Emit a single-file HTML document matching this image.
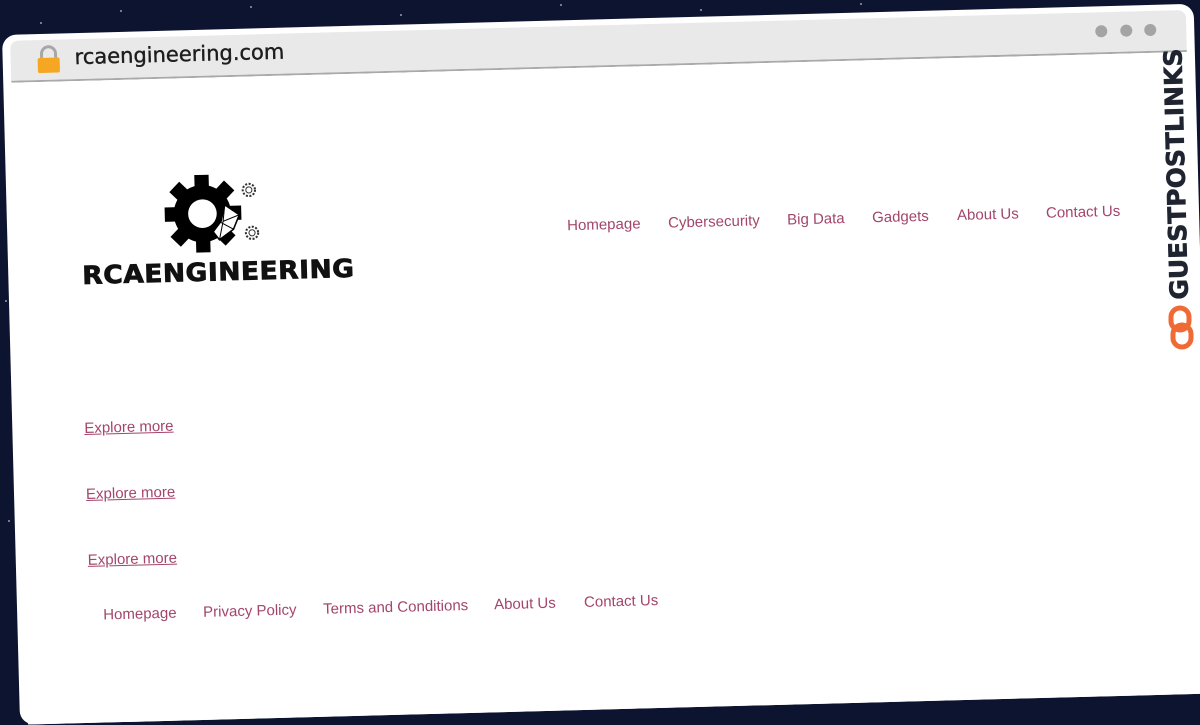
<!DOCTYPE html>
<html><head><meta charset="utf-8">
<style>
html,body{margin:0;padding:0;width:1200px;height:670px;overflow:hidden;background:#0d1430;font-family:"Liberation Sans",sans-serif}
.star{position:absolute;background:#cfd6ea;border-radius:50%;width:2px;height:2px;opacity:.7}
#win{position:absolute;left:2px;top:35px;width:1192px;height:690px;background:#fff;border-radius:14px;transform-origin:0 0;transform:rotate(-1.5deg)}
#bar{position:absolute;left:8px;top:6px;right:8px;height:40px;background:#e9e9ea;border-radius:8px 8px 0 0;border-bottom:2px solid #a9a9ab}
#content{position:absolute;left:8px;top:48px;right:8px;bottom:0;background:#fff}
.a{position:absolute;color:#a3456b;font-size:15px;white-space:nowrap;line-height:18px}
.u{text-decoration:underline}
.dot{position:absolute;top:13px;width:12px;height:12px;border-radius:50%;background:#a4a4a6}
</style></head><body>
<div class="star" style="left:120px;top:10px"></div>
<div class="star" style="left:250px;top:6px"></div>
<div class="star" style="left:400px;top:14px"></div>
<div class="star" style="left:560px;top:4px"></div>
<div class="star" style="left:700px;top:9px"></div>
<div class="star" style="left:860px;top:3px"></div>
<div class="star" style="left:40px;top:22px"></div>
<div class="star" style="left:5px;top:300px"></div>
<div class="star" style="left:8px;top:520px"></div>
<div id="win">
  <div id="bar">
    <svg style="position:absolute;left:25px;top:5px" width="26" height="30" viewBox="0 0 26 30"><path d="M6 13V9a7 7 0 0 1 14 0v4" fill="none" stroke="#a7a7a7" stroke-width="3"/><rect x="2" y="13" width="22" height="15" rx="2" fill="#f5a623"/></svg>
    <div style="position:absolute;left:64px;top:6px;font-family:'DejaVu Sans',sans-serif;font-size:21px;color:#1d1d1d;-webkit-text-stroke:0.4px #1d1d1d">rcaengineering.com</div>
    <div class="dot" style="left:1085px"></div>
    <div class="dot" style="left:1110px"></div>
    <div class="dot" style="left:1134px"></div>
  </div>
  <div id="content">
    <svg style="position:absolute;left:150px;top:97px" width="104" height="92" viewBox="0 0 100 90">
      <g transform="translate(36,38)">
        <circle r="28" fill="#000"/>
        <g fill="#000">
          <rect x="-7" y="-38" width="14" height="14"/><rect x="-7" y="24" width="14" height="14"/>
          <rect x="-38" y="-7" width="14" height="14"/><rect x="24" y="-7" width="14" height="14"/>
          <rect x="-7" y="-38" width="14" height="14" transform="rotate(45)"/><rect x="-7" y="24" width="14" height="14" transform="rotate(45)"/>
          <rect x="-38" y="-7" width="14" height="14" transform="rotate(45)"/><rect x="24" y="-7" width="14" height="14" transform="rotate(45)"/>
        </g>
        <circle r="14" fill="#fff"/>
      </g>
      <path d="M58 30l14 10-6 14-14 10-6-8 8-10z" fill="#fff" stroke="#000" stroke-width="1.5"/>
      <path d="M58 30l-2 16 16-6M56 46l-4 18M66 54l-14-8" fill="none" stroke="#000" stroke-width="1"/>
      <circle cx="82" cy="16" r="6" fill="none" stroke="#333" stroke-width="2" stroke-dasharray="2 1.5"/>
      <circle cx="82" cy="16" r="3" fill="none" stroke="#333" stroke-width="1"/>
      <circle cx="84" cy="58" r="6" fill="none" stroke="#333" stroke-width="2" stroke-dasharray="2 1.5"/>
      <circle cx="84" cy="58" r="3" fill="none" stroke="#333" stroke-width="1"/>
    </svg>
    <div style="position:absolute;left:66px;top:180px;font-family:'DejaVu Sans',sans-serif;font-weight:bold;font-size:25px;color:#111;letter-spacing:0.5px;transform:scaleX(1.06);transform-origin:0 0;-webkit-text-stroke:0.8px #111">RCAENGINEERING</div>
    <div class="a" style="left:552px;top:149px">Homepage</div>
    <div class="a" style="left:653px;top:149px">Cybersecurity</div>
    <div class="a" style="left:772px;top:149px">Big Data</div>
    <div class="a" style="left:857px;top:149px">Gadgets</div>
    <div class="a" style="left:942px;top:149px">About Us</div>
    <div class="a" style="left:1031px;top:149px">Contact Us</div>
    <div class="a u" style="left:64px;top:339px">Explore more</div>
    <div class="a u" style="left:64px;top:405px">Explore more</div>
    <div class="a u" style="left:64px;top:471px">Explore more</div>
    <div class="a" style="left:78px;top:526px">Homepage</div>
    <div class="a" style="left:178px;top:526px">Privacy Policy</div>
    <div class="a" style="left:298px;top:526px">Terms and Conditions</div>
    <div class="a" style="left:469px;top:526px">About Us</div>
    <div class="a" style="left:559px;top:526px">Contact Us</div>
  </div>
</div>
<div style="position:absolute;left:1165px;top:300px;width:250px;transform-origin:0 0;transform:rotate(-91.5deg);font-family:'DejaVu Sans',sans-serif;font-weight:bold;font-size:25px;color:#1f2430;white-space:nowrap;-webkit-text-stroke:0.6px #1f2430">GUESTPOSTLINKS</div>
<svg style="position:absolute;left:1168px;top:305px" width="26" height="46" viewBox="0 0 26 46"><g fill="none" stroke="#f06a35" stroke-width="5"><rect x="3" y="3" width="18" height="22" rx="9"/><rect x="5" y="20" width="18" height="22" rx="9"/></g></svg>
</body></html>
